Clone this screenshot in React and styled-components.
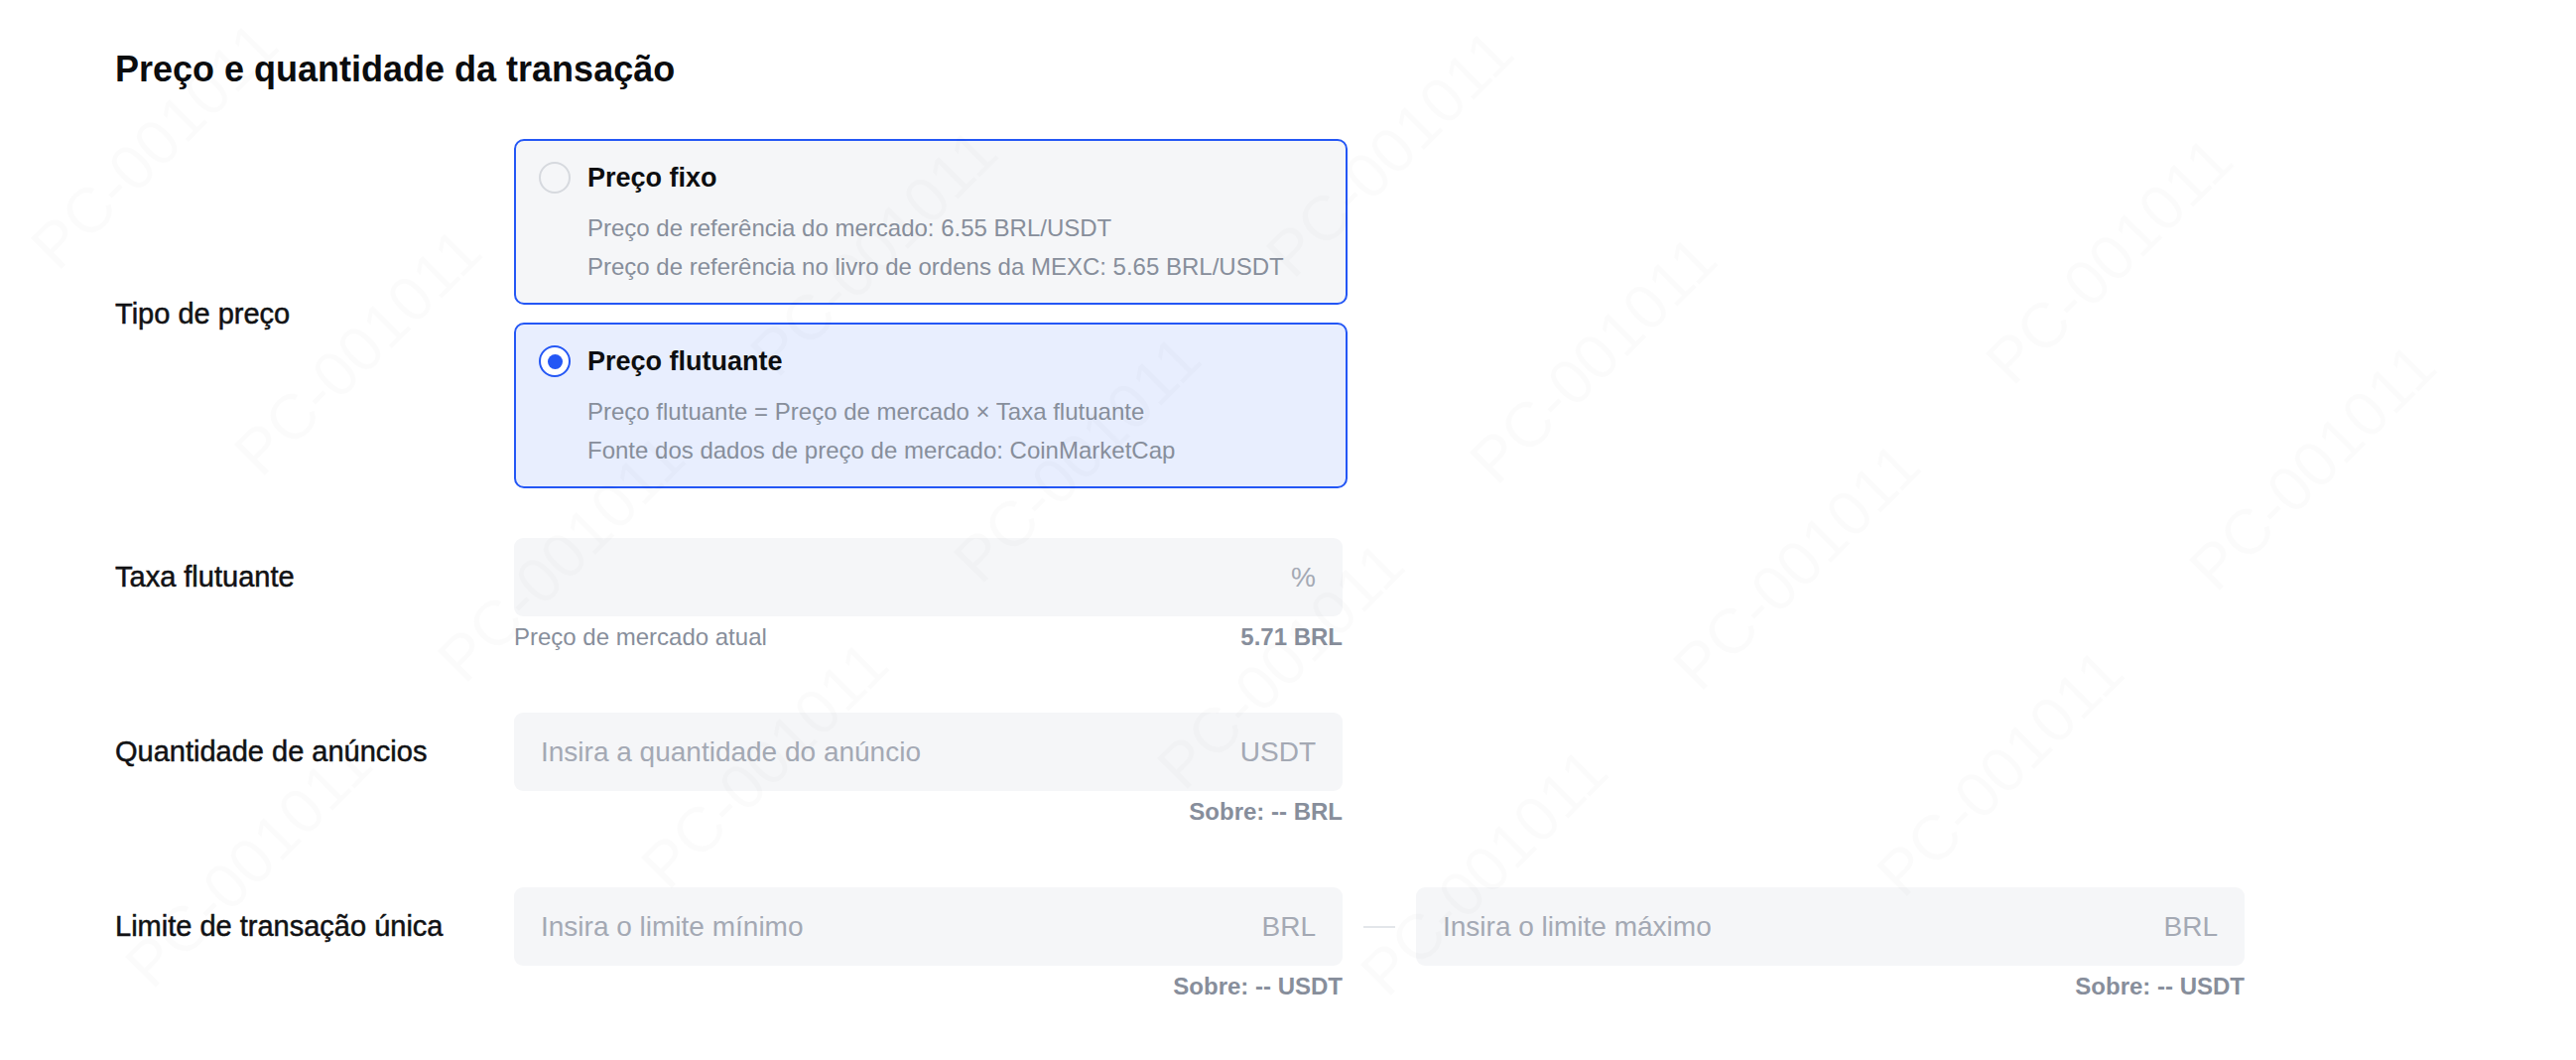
import React, { useState } from "react";
import styled, { createGlobalStyle } from "styled-components";

const GlobalStyle = createGlobalStyle`
  html, body {
    margin: 0;
    padding: 0;
    background: #ffffff;
  }
  body {
    font-family: "Liberation Sans", Arial, Helvetica, sans-serif;
    color: #111214;
  }
  * {
    box-sizing: border-box;
  }
`;

const BLUE = "#2457f5";
const MUTED = "#878e9b";
const PLACEHOLDER = "#a4a9b4";
const FIELD_BG = "#f5f6f8";

// watermark lattice, measured off the screenshot (only whole marks kept)
const marks = [];
for (let i = -6; i < 8; i++) {
  for (let j = -3; j < 7; j++) {
    const x = 1416 + i * 205 + j * 520;
    const y = 170 + i * 208 - j * 100;
    if (x > 140 && x < 2460 && y > 130 && y < 940) marks.push({ x, y });
  }
}

const Watermark = () => (
  <WatermarkSvg width="2596" height="1068" aria-hidden="true">
    {marks.map((m, k) => (
      <text
        key={k}
        x={m.x}
        y={m.y}
        textAnchor="middle"
        transform={`rotate(-45 ${m.x} ${m.y})`}
      >
        PC-001011
      </text>
    ))}
  </WatermarkSvg>
);

const priceTypes = [
  {
    id: "fixed",
    title: "Preço fixo",
    lines: [
      "Preço de referência do mercado: 6.55 BRL/USDT",
      "Preço de referência no livro de ordens da MEXC: 5.65 BRL/USDT",
    ],
  },
  {
    id: "floating",
    title: "Preço flutuante",
    lines: [
      "Preço flutuante = Preço de mercado × Taxa flutuante",
      "Fonte dos dados de preço de mercado: CoinMarketCap",
    ],
  },
];

const App = () => {
  const [priceType, setPriceType] = useState("floating");

  return (
    <Page>
      <GlobalStyle />
      <Watermark />
      <Title>Preço e quantidade da transação</Title>

      <Form>
        <Row $center>
          <Label>Tipo de preço</Label>
          <Options>
            {priceTypes.map((p) => (
              <OptionCard
                key={p.id}
                $active={priceType === p.id}
                onClick={() => setPriceType(p.id)}
              >
                <OptionHead>
                  <Radio $checked={priceType === p.id} />
                  <OptionTitle>{p.title}</OptionTitle>
                </OptionHead>
                <OptionText>
                  {p.lines.map((l) => (
                    <div key={l}>{l}</div>
                  ))}
                </OptionText>
              </OptionCard>
            ))}
          </Options>
        </Row>

        <Row $space={50}>
          <Label>Taxa flutuante</Label>
          <Field>
            <InputBox>
              <Input />
              <Unit>%</Unit>
            </InputBox>
            <Hint>
              <span>Preço de mercado atual</span>
              <b>5.71 BRL</b>
            </Hint>
          </Field>
        </Row>

        <Row $space={60}>
          <Label>Quantidade de anúncios</Label>
          <Field>
            <InputBox>
              <Input placeholder="Insira a quantidade do anúncio" />
              <Unit>USDT</Unit>
            </InputBox>
            <Hint $right>
              <b>Sobre: -- BRL</b>
            </Hint>
          </Field>
        </Row>

        <Row $space={60}>
          <Label>Limite de transação única</Label>
          <Range>
            <Field>
              <InputBox>
                <Input placeholder="Insira o limite mínimo" />
                <Unit>BRL</Unit>
              </InputBox>
              <Hint $right>
                <b>Sobre: -- USDT</b>
              </Hint>
            </Field>
            <Dash>
              <span />
            </Dash>
            <Field>
              <InputBox>
                <Input placeholder="Insira o limite máximo" />
                <Unit>BRL</Unit>
              </InputBox>
              <Hint $right>
                <b>Sobre: -- USDT</b>
              </Hint>
            </Field>
          </Range>
        </Row>
      </Form>
    </Page>
  );
};

export default App;

const Page = styled.div`
  position: relative;
  min-height: 1068px;
  padding: 48px 0 0 116px;
  overflow: hidden;
`;

const WatermarkSvg = styled.svg`
  position: absolute;
  top: 0;
  left: 0;
  pointer-events: none;
  font-family: "Liberation Sans", Arial, sans-serif;
  font-size: 64px;
  fill: rgba(0, 0, 0, 0.014);
`;

const Title = styled.h1`
  margin: 0;
  font-size: 36px;
  line-height: 44px;
  font-weight: 700;
  color: #0b0c0e;
`;

const Form = styled.div`
  display: flex;
  flex-direction: column;
  margin-top: 48px;
`;

const Row = styled.div`
  display: flex;
  align-items: ${(p) => (p.$center ? "center" : "flex-start")};
  margin-top: ${(p) => p.$space || 0}px;
`;

const Label = styled.div`
  flex: 0 0 402px;
  height: 79px;
  display: flex;
  align-items: center;
  font-size: 29px;
  color: #111214;
  -webkit-text-stroke: 0.5px #111214;
`;

const Options = styled.div`
  display: flex;
  flex-direction: column;
  gap: 18px;
  width: 840px;
`;

const OptionCard = styled.div`
  height: 167px;
  padding: 21px 24px 17px 23px;
  border: 2px solid ${BLUE};
  border-radius: 10px;
  background: ${(p) => (p.$active ? "#e8eefe" : FIELD_BG)};
  cursor: pointer;
`;

const OptionHead = styled.div`
  display: flex;
  align-items: center;
  gap: 17px;
  height: 32px;
`;

const Radio = styled.span`
  position: relative;
  flex: 0 0 32px;
  width: 32px;
  height: 32px;
  border-radius: 50%;
  border: 2px solid ${(p) => (p.$checked ? BLUE : "#d6d9de")};
  background: ${(p) => (p.$checked ? "#ffffff" : "transparent")};

  &::after {
    content: "";
    display: ${(p) => (p.$checked ? "block" : "none")};
    position: absolute;
    top: 50%;
    left: 50%;
    width: 15px;
    height: 15px;
    margin: -7.5px 0 0 -7.5px;
    border-radius: 50%;
    background: ${BLUE};
  }
`;

const OptionTitle = styled.div`
  font-size: 27px;
  font-weight: 700;
  color: #0d0e10;
`;

const OptionText = styled.div`
  margin: 15px 0 0 49px;
  font-size: 24px;
  line-height: 39px;
  color: ${MUTED};
  white-space: nowrap;
`;

const Field = styled.div`
  display: flex;
  flex-direction: column;
  width: 835px;
`;

const InputBox = styled.div`
  display: flex;
  align-items: center;
  height: 79px;
  padding: 0 27px;
  border-radius: 9px;
  background: ${FIELD_BG};
`;

const Input = styled.input`
  flex: 1;
  min-width: 0;
  padding: 0;
  border: 0;
  outline: 0;
  background: transparent;
  font-family: inherit;
  font-size: 28px;
  color: #111214;

  &::placeholder {
    color: ${PLACEHOLDER};
  }
`;

const Unit = styled.span`
  font-size: 28px;
  color: ${PLACEHOLDER};
`;

const Hint = styled.div`
  display: flex;
  justify-content: ${(p) => (p.$right ? "flex-end" : "space-between")};
  margin-top: 5px;
  font-size: 24px;
  line-height: 32px;
  color: ${MUTED};

  b {
    font-weight: 700;
  }
`;

const Range = styled.div`
  display: flex;
  align-items: flex-start;
`;

const Dash = styled.div`
  flex: 0 0 74px;
  height: 79px;
  display: flex;
  align-items: center;
  justify-content: center;

  span {
    width: 32px;
    height: 2px;
    background: #e3e6ea;
  }
`;
